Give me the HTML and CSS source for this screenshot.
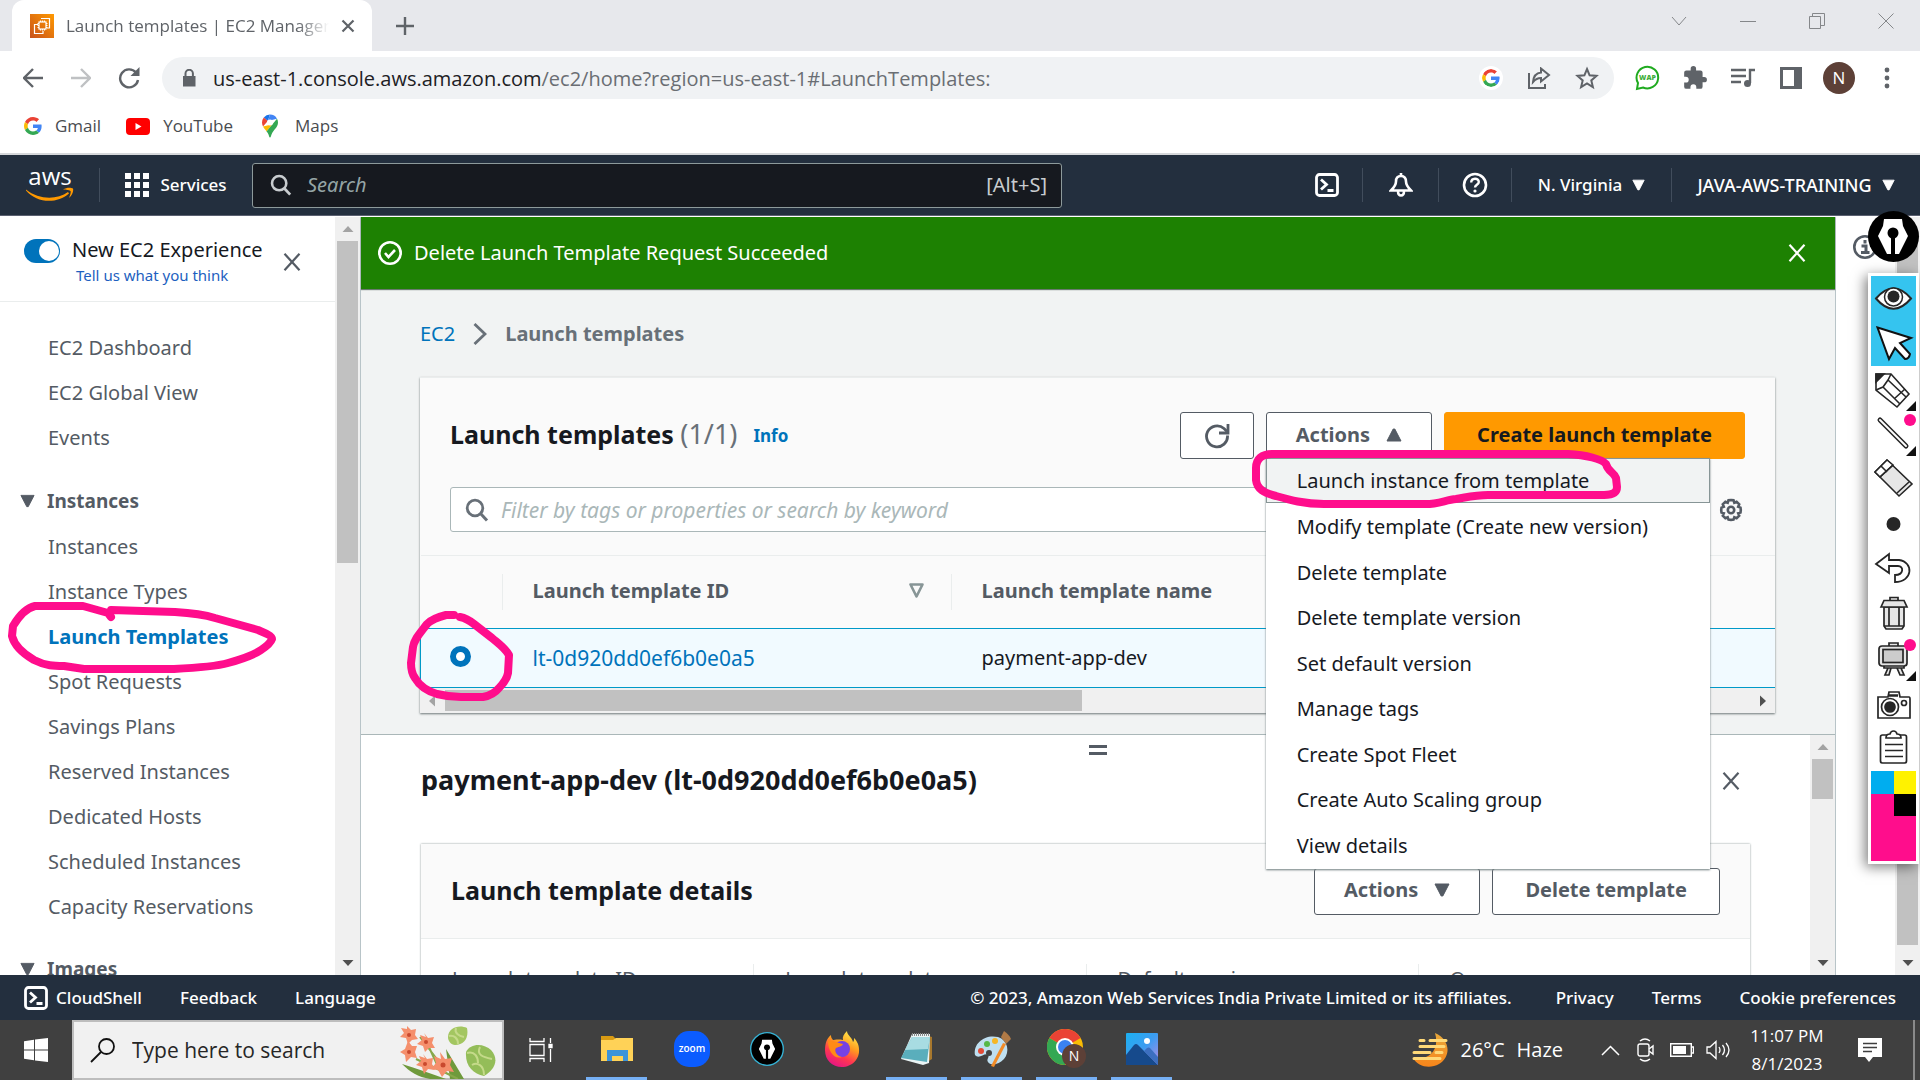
FILE: index.html
```html
<!DOCTYPE html>
<html lang="en">
<head>
<meta charset="utf-8">
<title>Launch templates | EC2 Management Console</title>
<link rel="stylesheet" href="styles.css">
</head>
<body>
<svg class="sprite" aria-hidden="true">
  <symbol id="i-close" viewBox="0 0 20 24"><path d="M1 2l18 20M19 2L1 22" fill="none" stroke="currentColor" stroke-width="2.6"/></symbol>
  <symbol id="i-shell" viewBox="0 0 24 24"><rect x="1.5" y="1.5" width="21" height="21" rx="3" fill="none" stroke="currentColor" stroke-width="2.8"/><path d="M6 6.500l5.500 5-5.500 5M12.500 17.500h6" fill="none" stroke="currentColor" stroke-width="2.800"/></symbol>
  <symbol id="i-search" viewBox="0 0 24 24"><circle cx="10" cy="10" r="7.800" fill="none" stroke="currentColor" stroke-width="2.800"/><path d="M15.500 15.500l6.500 7" stroke="currentColor" stroke-width="3"/></symbol>
  <symbol id="i-down" viewBox="0 0 16 14"><path d="M1 1h14L8.800 13H7.200z" fill="currentColor" stroke="currentColor" stroke-linejoin="round"/></symbol>
  <symbol id="i-google" viewBox="0 0 48 48"><path fill="#EA4335" d="M24 9.500c3.540 0 6.710 1.220 9.210 3.600l6.850-6.850C35.900 2.380 30.470 0 24 0 14.620 0 6.510 5.380 2.560 13.220l7.980 6.190C12.430 13.720 17.740 9.500 24 9.500z"/><path fill="#4285F4" d="M46.980 24.550c0-1.570-.15-3.090-.38-4.550H24v9.020h12.940c-.58 2.960-2.260 5.480-4.780 7.180l7.730 6c4.510-4.180 7.090-10.360 7.090-17.650z"/><path fill="#FBBC05" d="M10.530 28.590c-.48-1.450-.76-2.990-.76-4.590s.27-3.140.76-4.590l-7.980-6.190C.92 16.460 0 20.120 0 24s.92 7.540 2.560 10.780l7.970-6.190z"/><path fill="#34A853" d="M24 48c6.480 0 11.930-2.130 15.890-5.810l-7.730-6c-2.150 1.450-4.920 2.300-8.160 2.300-6.260 0-11.570-4.220-13.470-9.910l-7.980 6.190C6.510 42.620 14.620 48 24 48z"/></symbol>
  <symbol id="i-nib" viewBox="0 0 50 50"><path d="M16 8h18l1 7 5 10-9 18h-4V25h-4v18h-4l-9-18 5-10z" fill="#fff"/><circle cx="25" cy="22" r="5.500" fill="#000"/><path d="M25 22v21" stroke="#000" stroke-width="3"/></symbol>
  <symbol id="i-up-s" viewBox="0 0 12 8"><path d="M6 1l5.500 6H.5z" fill="currentColor"/></symbol>
  <symbol id="i-down-s" viewBox="0 0 12 8"><path d="M6 7l5.500-6H.5z" fill="currentColor"/></symbol>
</svg>

<header class="browser">
  <div class="tabstrip">
    <div class="tab">
      <svg class="favicon" viewBox="0 0 24 24"><defs><linearGradient id="fav" x1="0" y1="1" x2="1" y2="0"><stop offset="0" stop-color="#c8511b"/><stop offset="1" stop-color="#ff9900"/></linearGradient></defs><rect width="24" height="24" fill="url(#fav)"/><g fill="none" stroke="#fff" stroke-width="1.200"><path d="M11 4.500h8.500V14h-2.500M8 10.500H4.500v9H13V17"/><rect x="9" y="8" width="7" height="7"/><path d="M10.500 6.500V8M12.500 6.500V8M14.500 6.500V8M10.500 15v1.500M12.500 15v1.500M14.500 15v1.500M7.500 9.500H9M7.500 11.500H9M7.500 13.500H9M16 9.500h1.500M16 11.500h1.500M16 13.500h1.500"/></g></svg>
      <span class="tab-title">Launch templates | EC2 Management</span>
      <button class="plain tab-close" aria-label="Close tab"><svg width="14" height="14" viewBox="0 0 14 14"><path d="M1.500 1.500l11 11M12.500 1.500l-11 11" stroke="currentColor" stroke-width="2.200"/></svg></button>
    </div>
    <button class="plain newtab" aria-label="New tab"><svg width="18" height="18" viewBox="0 0 18 18"><path d="M9 0v18M0 9h18" stroke="currentColor" stroke-width="2.400"/></svg></button>
    <div class="winctl">
      <button class="plain" aria-label="Tab search"><svg width="16" height="10" viewBox="0 0 16 10"><path d="M1 1l7 8 7-8" fill="none" stroke="currentColor"/></svg></button>
      <button class="plain" aria-label="Minimize"><svg width="16" height="10" viewBox="0 0 16 10"><path d="M0 5.500h16" stroke="currentColor"/></svg></button>
      <button class="plain" aria-label="Restore"><svg width="16" height="16" viewBox="0 0 16 16"><path d="M.5 3.500h11v12H.5zM3.500 3.500v-3h12v12h-4" fill="none" stroke="currentColor"/></svg></button>
      <button class="plain" aria-label="Close"><svg width="16" height="16" viewBox="0 0 16 16"><path d="M.5.5l15 15M15.500.5l-15 15" stroke="currentColor"/></svg></button>
    </div>
  </div>
  <div class="toolbar">
    <button class="plain slot" aria-label="Back"><svg width="20" height="20" viewBox="0 0 20 20"><path d="M20 10H2M10 1l-9 9 9 9" fill="none" stroke="#5f6368" stroke-width="2.400"/></svg></button>
    <button class="plain slot" aria-label="Forward"><svg width="20" height="20" viewBox="0 0 20 20"><path d="M0 10h18M10 1l9 9-9 9" fill="none" stroke="#bfc1c3" stroke-width="2.400"/></svg></button>
    <button class="plain slot" aria-label="Reload"><svg width="22" height="22" viewBox="0 0 22 22"><path d="M18 5.500A9 9 0 1 0 20 13" fill="none" stroke="#5f6368" stroke-width="2.400"/><path d="M21.500 0v9h-9z" fill="#5f6368"/></svg></button>
    <div class="omnibox">
      <svg class="lock" width="24" height="18" viewBox="0 0 24 18"><path d="M6 7h12.500v10.500H6z" fill="#5f6368"/><path d="M8.500 8V4.500a3.700 3.700 0 0 1 7.400 0V8" fill="none" stroke="#5f6368" stroke-width="2"/></svg>
      <span class="url">us-east-1.console.aws.amazon.com<span class="dim">/ec2/home?region=us-east-1#LaunchTemplates:</span></span>
      <button class="plain slot" aria-label="Google"><svg class="disc" width="18" height="18"><use href="#i-google"/></svg></button>
      <button class="plain slot" aria-label="Share"><svg width="24" height="22" viewBox="0 0 24 22" fill="none" stroke="#5f6368" stroke-width="2"><path d="M2 6v15h16v-4M14 1.500l8 6.500-8 6.500V11c-3.500 0-5.500 1-8 4 .500-5.500 3-9 8-9.500z"/></svg></button>
      <button class="plain slot" aria-label="Bookmark"><svg width="24" height="24" viewBox="0 0 24 24"><path d="M12 3l2.600 6.300 6.900.6-5.200 4.500 1.600 6.700-5.900-3.600-5.900 3.600 1.600-6.700-5.200-4.500 6.900-.6z" fill="none" stroke="#5f6368" stroke-width="2"/></svg></button>
    </div>
    <button class="plain slot" aria-label="WAP"><svg width="26" height="26" viewBox="0 0 26 26"><path d="M3 24l1-6A10.800 10.800 0 1 1 9 22.500z" fill="none" stroke="#1faa1f" stroke-width="2"/><text x="13.500" y="15" font-family="Open Sans, sans-serif" font-size="7" font-weight="800" fill="#3fae3a" text-anchor="middle">WAP</text></svg></button>
    <button class="plain slot" aria-label="Extensions"><svg width="26" height="26" viewBox="0 0 24 24"><path d="M20.500 11H19V7a2 2 0 0 0-2-2h-4V3.500a2.500 2.500 0 0 0-5 0V5H4a2 2 0 0 0-2 2v3.800h1.500a2.700 2.700 0 0 1 0 5.400H2V20a2 2 0 0 0 2 2h3.800v-1.500a2.700 2.700 0 0 1 5.400 0V22H17a2 2 0 0 0 2-2v-4h1.500a2.500 2.500 0 0 0 0-5z" fill="#5f6368"/></svg></button>
    <button class="plain slot" aria-label="Media"><svg width="24" height="20" viewBox="0 0 24 20"><path d="M0 2h15M0 8h15M0 14h10M24 2h-5v13" fill="none" stroke="#5f6368" stroke-width="2.400"/><circle cx="16.500" cy="15.500" r="3.500" fill="#5f6368"/></svg></button>
    <button class="plain slot" aria-label="Side panel"><svg width="22" height="22" viewBox="0 0 22 22"><path d="M0 0h22v22H0zM3 3v16h11V3z" fill="#5f6368" fill-rule="evenodd"/></svg></button>
    <button class="plain slot" aria-label="Profile"><span class="avatar">N</span></button>
    <button class="plain slot" aria-label="Menu"><svg width="6" height="22" viewBox="0 0 6 22" fill="#5f6368"><circle cx="3" cy="3" r="2.400"/><circle cx="3" cy="11" r="2.400"/><circle cx="3" cy="19" r="2.400"/></svg></button>
  </div>
  <nav class="bookmarks">
    <a href="#"><svg width="18" height="18"><use href="#i-google"/></svg>Gmail</a>
    <a href="#"><svg width="24" height="17" viewBox="0 0 24 17"><rect width="24" height="17" rx="4" fill="#f00"/><path d="M9.500 5v7l6-3.500z" fill="#fff"/></svg>YouTube</a>
    <a href="#"><svg width="24" height="24" viewBox="0 0 24 24"><path d="M12 .5a8 8 0 0 0-6.200 3l4 3.400z" fill="#1a73e8"/><path d="M5.800 3.500A8 8 0 0 0 4 8.600c0 1.500.4 2.800 1 4l4.800-5.700z" fill="#ea4335"/><path d="M12 .5a8 8 0 0 1 7 4.200L9.800 6.900z" fill="#4285f4"/><path d="M5 12.600c.9 1.700 2.400 3 3.500 4.900L19 4.700l-4.500 5.500z" fill="#fbbc04"/><path d="M19 4.700c.7 1.200 1 2.500 1 3.900 0 5.200-4.500 6.900-6.500 11.900-.5 1.300-.7 3-1.500 3s-1-1.700-1.500-3c-.5-1.200-1.200-2.200-2-3z" fill="#34a853"/><circle cx="12" cy="8.600" r="3" fill="#fff"/></svg>Maps</a>
  </nav>
</header>

<header class="aws-bar">
  <a class="aws-logo" href="#" aria-label="AWS"><svg width="50" height="34" viewBox="0 0 50 34"><text x="25" y="17" font-family="Open Sans, sans-serif" font-size="24" font-weight="500" fill="#fff" text-anchor="middle">aws</text><path d="M1 21.500c13 10.500 31 10.500 42 2.500l1 1.500c-12 10.500-32 10-43-3zM38 21.500c4-2.500 8-2 10-1 .8 3-1 7-4 9.500 1.500-3.500 2-6 1.500-7-1.500-1-4.500-1.500-7.500-1.500z" fill="#f90"/></svg></a>
  <button class="plain services"><svg width="24" height="24" viewBox="0 0 24 24" fill="#fff"><path d="M0 0h6v6H0zM9 0h6v6H9zM18 0h6v6h-6zM0 9h6v6H0zM9 9h6v6H9zM18 9h6v6h-6zM0 18h6v6H0zM9 18h6v6H9zM18 18h6v6h-6z"/></svg>Services</button>
  <label class="aws-search"><svg width="22" height="22"><use href="#i-search"/></svg><input type="search" placeholder="Search" aria-label="Search"><span>[Alt+S]</span></label>
  <div class="aws-tools">
    <button class="plain w72" aria-label="CloudShell"><svg width="24" height="24"><use href="#i-shell"/></svg></button>
    <button class="plain w76" aria-label="Notifications"><svg width="24" height="24" viewBox="0 0 24 24" fill="none" stroke="#fff" stroke-width="2.600"><path d="M12 0v3M12 3c-3.500 0-5 2.500-5 5.500 0 4-2.500 6.500-5 9h20c-2.500-2.500-5-5-5-9C17 5.500 15.500 3 12 3zM9 18c0 6 6 6 6 0"/></svg></button>
    <button class="plain w73" aria-label="Help"><svg width="26" height="26" viewBox="0 0 26 26"><circle cx="13" cy="13" r="11" fill="none" stroke="#fff" stroke-width="2.600"/><path d="M9.200 10.500c0-5 7.600-5 7.600-.5 0 2.800-3.800 2.800-3.800 5.500" fill="none" stroke="#fff" stroke-width="2.400"/><circle cx="13" cy="19" r="1.600" fill="#fff"/></svg></button>
    <button class="plain w160">N. Virginia<svg width="13" height="12"><use href="#i-down"/></svg></button>
    <button class="plain w248">JAVA-AWS-TRAINING<svg width="13" height="12"><use href="#i-down"/></svg></button>
  </div>
</header>

<div class="console">
  <aside class="side">
    <div class="side-body">
      <div class="side-top">
        <label class="switch"><input type="checkbox" checked aria-label="New EC2 Experience"></label>
        <div class="side-title"><span>New EC2 Experience</span><a href="#">Tell us what you think</a></div>
        <button class="plain" aria-label="Close navigation"><svg width="20" height="20"><use href="#i-close"/></svg></button>
      </div>
      <ul class="nav first"><li><a href="#">EC2 Dashboard</a></li><li><a href="#">EC2 Global View</a></li><li><a href="#">Events</a></li></ul>
      <h3><svg width="15" height="14"><use href="#i-down"/></svg>Instances</h3>
      <ul class="nav">
        <li><a href="#">Instances</a></li><li><a href="#">Instance Types</a></li>
        <li class="current"><a href="#">Launch Templates</a>
          <svg class="ink ink-nav" width="272" height="76" viewBox="8 600 272 76"><path d="M112 617l-3-4-25-7H36c-9 2-16 10-22 20l-1 10c2 8 10 17 22 24 12 6 20 6 30 6l20 3h90c20-1 40-2 54-6 14-4 26-8 33-13 6-4 10-8 11-11 0-3-7-6-14-9l-43-12c-13-4-24-5-40-6l-64-2"/></svg></li>
        <li><a href="#">Spot Requests</a></li><li><a href="#">Savings Plans</a></li><li><a href="#">Reserved Instances</a></li><li><a href="#">Dedicated Hosts</a></li><li><a href="#">Scheduled Instances</a></li><li><a href="#">Capacity Reservations</a></li>
      </ul>
      <h3><svg width="15" height="14"><use href="#i-down"/></svg>Images</h3>
    </div>
    <div class="vbar"><svg class="off" width="12" height="8"><use href="#i-up-s"/></svg><i class="thumb t-side"></i><svg width="12" height="8"><use href="#i-down-s"/></svg></div>
  </aside>

  <main>
    <div class="flash" role="status">
      <svg width="26" height="26" viewBox="0 0 26 26" fill="none" stroke="#fff" stroke-width="2.600"><circle cx="13" cy="13" r="10.700"/><path d="M8 13l3.500 4 6.500-7"/></svg>
      <span>Delete Launch Template Request Succeeded</span>
      <button class="plain" aria-label="Dismiss"><svg width="20" height="20"><use href="#i-close"/></svg></button>
    </div>
    <section class="upper">
      <nav class="crumbs"><a href="#">EC2</a><svg width="14" height="22" viewBox="0 0 14 22"><path d="M1.500 1l10.500 10-10.500 10" fill="none" stroke="#687078" stroke-width="2.800"/></svg><span>Launch templates</span></nav>
      <div class="card">
        <div class="card-head">
          <h1>Launch templates <span>(1/1)</span></h1><a class="info" href="#">Info</a>
          <button class="btn refresh" aria-label="Refresh"><svg width="26" height="26" viewBox="0 0 26 26"><path d="M23.500 12.500a10.500 10.500 0 1 1-3.500-7l3 3" fill="none" stroke="#545b64" stroke-width="2.800"/><path d="M24 1v9h-9" fill="none" stroke="#545b64" stroke-width="2.800"/></svg></button>
          <div class="drop">
            <button class="btn" aria-expanded="true">Actions<svg class="flip" width="16" height="14"><use href="#i-down"/></svg></button>
            <ul class="menu">
              <li class="hover"><button class="plain">Launch instance from template</button></li>
              <li><button class="plain">Modify template (Create new version)</button></li>
              <li><button class="plain">Delete template</button></li>
              <li><button class="plain">Delete template version</button></li>
              <li><button class="plain">Set default version</button></li>
              <li><button class="plain">Manage tags</button></li>
              <li><button class="plain">Create Spot Fleet</button></li>
              <li><button class="plain">Create Auto Scaling group</button></li>
              <li><button class="plain">View details</button></li>
            </ul>
            <svg class="ink ink-menu" width="376" height="64" viewBox="1248 446 376 64"><path d="M1442 454h-172c-10 0-16 5-16 14v12c1 9 8 13 20 16 14 4 28 8 48 8h102c12 0 20-4 30-5 12-2 20-4 32-4h116c10 0 13-3 13-8l-1-9c-2-6-8-6-10-14-4-5-20-9-38-10z"/></svg>
          </div>
          <button class="btn primary">Create launch template</button>
        </div>
        <div class="filter-row">
          <label class="filter"><svg width="24" height="24"><use href="#i-search"/></svg><input type="text" placeholder="Filter by tags or properties or search by keyword" aria-label="Filter launch templates"></label>
          <button class="plain" aria-label="Preferences"><svg width="24" height="24" viewBox="0 0 24 24" fill="none" stroke="#545b64"><path d="M12 2l2.500.3.800 2.400 2.300-1 2.600 2.600-1 2.400 2.300.9.300 2.400-.3 2.500-2.300.8 1 2.300-2.600 2.700-2.300-1-.8 2.300-2.500.3-2.500-.3-.8-2.300-2.300 1-2.600-2.700 1-2.300-2.300-.8-.3-2.500.3-2.400 2.300-.9-1-2.400 2.600-2.600 2.300 1 .8-2.400z" stroke-width="2.600"/><circle cx="12" cy="12" r="3.200" stroke-width="2.600"/></svg></button>
        </div>
        <table>
          <thead><tr><th class="c-pick"></th><th class="c-id"><span>Launch template ID</span><svg width="15" height="15" viewBox="0 0 15 15"><path d="M1.500 1.500h12l-6 12z" fill="none" stroke="#879596" stroke-width="2.600" stroke-linejoin="round"/></svg></th><th><span>Launch template name</span></th></tr></thead>
          <tbody><tr><td class="c-pick"><input type="radio" name="lt" checked aria-label="Select payment-app-dev"></td><td><a href="#">lt-0d920dd0ef6b0e0a5</a></td><td>payment-app-dev</td></tr></tbody>
        </table>
        <div class="hbar"><svg class="off left" width="12" height="8"><use href="#i-up-s"/></svg><i></i><svg class="right" width="12" height="8"><use href="#i-up-s"/></svg></div>
        <svg class="ink ink-radio" width="112" height="96" viewBox="406 608 112 96"><path d="M455 615h-8c-8 2-14 4-19 9-6 8-13 15-14 23l-2 16c0 6 1 11 4 15 4 7 12 13 22 16 8 2 15 3 24 3h22c6-1 12-4 16-9 5-5 8-9 9-15l1-18c-4-7-10-11-17-17l-18-14c-5-4-9-6-14-7"/></svg>
      </div>
    </section>
    <section class="split">
      <div class="split-body">
        <div class="grip"><i></i><i></i></div>
        <div class="split-title"><h2>payment-app-dev (lt-0d920dd0ef6b0e0a5)</h2><button class="plain" aria-label="Close panel"><svg width="20" height="20"><use href="#i-close"/></svg></button></div>
        <div class="details">
          <div class="details-head"><h2>Launch template details</h2><button class="btn">Actions<svg width="16" height="14"><use href="#i-down"/></svg></button><button class="btn wide">Delete template</button></div>
          <dl><dt>Launch template ID</dt><dt>Launch template name</dt><dt>Default version</dt><dt>Owner</dt></dl>
        </div>
      </div>
      <div class="vbar"><svg class="off" width="12" height="8"><use href="#i-up-s"/></svg><i class="thumb t-split"></i><svg width="12" height="8"><use href="#i-down-s"/></svg></div>
    </section>
  </main>

  <aside class="help">
    <button class="plain" aria-label="Open help panel"><svg width="26" height="26" viewBox="0 0 26 26"><circle cx="13" cy="13" r="10.700" fill="none" stroke="#545b64" stroke-width="2.600"/><path d="M13 6v3.500M9.500 12H14v6.500M9 18.500h8.500" fill="none" stroke="#545b64" stroke-width="3"/></svg></button>
    <div class="vbar"><svg class="off" width="12" height="8"><use href="#i-up-s"/></svg><i class="thumb t-page"></i><svg width="12" height="8"><use href="#i-down-s"/></svg></div>
  </aside>

  <div class="pen">
    <div class="pen-badge"><svg width="50" height="50"><use href="#i-nib"/></svg></div>
    <div class="pen-tools">
      <button class="plain on" aria-label="Show"><svg width="45" height="45" viewBox="0 0 45 45"><path d="M5 22.500Q22.500 2 40 22.500 22.500 43 5 22.500z" fill="#fff" stroke="#262626" stroke-width="2"/><circle cx="22.500" cy="21" r="9" fill="#fff" stroke="#262626" stroke-width="1.500"/><circle cx="22.500" cy="20.500" r="6" fill="#262626"/></svg></button>
      <button class="plain on" aria-label="Pointer"><svg width="45" height="45" viewBox="0 0 45 45"><path d="M6.500 6.500L40 17l-11 5 10 11q-1 5-5 5L24 27l-6 11z" fill="#fff" stroke="#111" stroke-width="2"/></svg></button>
      <button class="plain" aria-label="Pen"><svg width="45" height="45" viewBox="0 0 45 45" stroke="#262626" stroke-width="1.600" fill="#fff"><path d="M5 8h15l18 20-12 13L5 24z"/><path d="M5 24l7-3 5-7 3-6M12 21l17 17M17 14l18 17M23 33l11-10" fill="none"/><path d="M5 8h8l-8 8z" fill="#262626"/><path d="M45 35v10H35z" fill="#111" stroke="none"/></svg></button>
      <button class="plain" aria-label="Line"><svg width="45" height="45" viewBox="0 0 45 45"><path d="M9 9l26 26" stroke="#262626" stroke-width="5" stroke-linecap="round"/><path d="M9 9l26 26" stroke="#fff" stroke-width="2" stroke-linecap="round"/><circle cx="39" cy="9" r="6" fill="#ff0d8c"/><path d="M45 35v10H35z" fill="#111"/></svg></button>
      <button class="plain" aria-label="Eraser"><svg width="45" height="45" viewBox="0 0 45 45" stroke="#262626" stroke-width="1.600"><path d="M4 16L16 4l25 24-13 12z" fill="#e6e6e6"/><path d="M4 16L16 4l6 5L9 21z" fill="#fff"/><path d="M26 37l12-11M9 21l13-12M10 10l6 6" fill="none"/></svg></button>
      <button class="plain" aria-label="Size"><svg width="45" height="45" viewBox="0 0 45 45"><circle cx="22.500" cy="23" r="7" fill="#262626"/></svg></button>
      <button class="plain" aria-label="Undo"><svg width="45" height="45" viewBox="0 0 45 45"><path d="M5 18L18 8v6h10c15 2 14 22-4 22v-7c9 0 9-9 3-9h-9v7z" fill="#fff" stroke="#262626" stroke-width="1.800"/></svg></button>
      <button class="plain" aria-label="Clear"><svg width="45" height="45" viewBox="0 0 45 45" stroke="#262626" stroke-width="1.700" fill="#e6e6e6"><path d="M19 9V6.500h8V9M13 16h20v19l-2 3H15l-2-3z"/><path d="M10 16l3-6.500h20l3 6.500zM18 16v19M28 16v19M13 35h20" /></svg></button>
      <button class="plain" aria-label="Board"><svg width="45" height="45" viewBox="0 0 45 45" stroke="#262626" stroke-width="1.700" fill="#e6e6e6"><path d="M18 10V7h9v3M14 32l-1 0v-3h20v3zM17 32l-3 7h4l2-7M26 32l3 7h4l-3-7"/><rect x="8" y="10" width="28" height="20" rx="3"/><rect x="12" y="13.500" width="20" height="13" fill="#ccc"/><circle cx="39" cy="9" r="6" fill="#ff0d8c" stroke="none"/><path d="M45 35v10H35z" fill="#111" stroke="none"/></svg></button>
      <button class="plain" aria-label="Capture"><svg width="45" height="45" viewBox="0 0 45 45" stroke="#262626" stroke-width="1.700" fill="#fff"><path d="M7 16h10l1-5h10l1 5h9q1 0 1 2v19H7z"/><circle cx="19" cy="26" r="8.500"/><circle cx="19" cy="26" r="5" fill="#262626"/><circle cx="33" cy="22" r="2.500"/><path d="M18 14.500h9" stroke-width="2.500"/></svg></button>
      <button class="plain" aria-label="Clipboard"><svg width="45" height="45" viewBox="0 0 45 45" stroke="#262626" stroke-width="1.700" fill="#fff"><rect x="9.500" y="9" width="26" height="28" rx="2"/><path d="M15 12c0-4 3-4 4-4 1-4 6-4 7 0 1 0 4 0 4 4zM14 18.500h18M14 24.500h18M14 30.500h18"/></svg></button>
      <div class="swatches"><i class="cyan"></i><i class="yellow"></i><i class="black"></i></div>
    </div>
  </div>
</div>

<footer class="aws-foot">
  <a href="#" class="shell"><svg width="24" height="24"><use href="#i-shell"/></svg>CloudShell</a><a href="#">Feedback</a><a href="#">Language</a>
  <span class="copy">© 2023, Amazon Web Services India Private Limited or its affiliates.</span><a href="#">Privacy</a><a href="#">Terms</a><a href="#">Cookie preferences</a>
</footer>

<footer class="taskbar">
  <button class="plain start" aria-label="Start"><svg width="24" height="24" viewBox="0 0 24 24" fill="#fff"><path d="M0 3.300l10-1.500v9.700H0zM11 1.600L24 0v11.500H11zM0 12.500h10v9.700L0 20.700zM11 12.500h13V24l-13-1.600z"/></svg></button>
  <label class="task-search"><svg width="25" height="25" viewBox="0 0 25 25" fill="none" stroke="#111" stroke-width="1.800"><circle cx="16.500" cy="8.500" r="7.500"/><path d="M11 14L1 24"/></svg><input type="text" placeholder="Type here to search" aria-label="Type here to search">
    <svg class="flowers" width="98" height="54" viewBox="0 0 98 54"><path d="M4 39c16 5 30 10 44 15H32C20 52 12 47 4 39zM48 24l18 30H52z" fill="#6f9a3c"/><path d="M22 12l26 34M30 20l12 26M18 34l30 14 12 6" stroke="#87a84a" stroke-width="2" fill="none"/><g fill="#f58f6c"><path d="M9 1l4 4 5-1-1 6 3 4-6 1-4 4-2-6-6-1 4-4-3-5 6 1z"/><path d="M26 8l4 5 6-1-2 6 3 5-6 0-4 4-2-6-6-2 5-4-2-5 6 2z"/><path d="M10 16l4 5 5 0-2 6 2 6-6-1-5 5-1-7-5-3 5-3z"/><path d="M25 29l4 5 6-1-1 6 3 6-7-1-4 5-2-7-6-2 5-4-2-5 6 2z"/><path d="M42 27l5 7 7-1-2 7 4 7-7-1-5 6-4-7-7-1 5-6-2-7 7 3z"/></g><g fill="#c9492e"><circle cx="11" cy="10" r="2"/><circle cx="28" cy="17" r="2"/><circle cx="11" cy="27" r="2"/><circle cx="27" cy="39" r="2"/><circle cx="45" cy="40" r="2.500"/></g><path d="M50 12C50 3 61-1 69 3c2 10-3 17-12 17-4 0-7-4-7-8z" fill="#a3c661"/><path d="M68 27c5-10 19-8 25-2 9 10 3 20-7 26-11-2-19-10-18-24z" fill="#94bd59"/><path d="M51 11c5-1 9 2 9 8M58 3c-2 5 3 8 8 9M69 28c8-2 11 4 11 10M82 22c-4 8 3 10 12 12M74 40c5-3 12 0 12 10" fill="none" stroke="#c5da8a" stroke-width="2"/></svg></label>
  <button class="plain taskview" aria-label="Task view"><svg width="24" height="24" viewBox="0 0 24 24" fill="none" stroke="#fff" stroke-width="1.300"><path d="M1 0v3.500h14V0M1 24v-3.500h14V24M1 6.500h14v11H1zM21.500 0v5M21.500 11v13"/><path d="M20 6.500h3v3h-3z" fill="#fff"/></svg></button>
  <div class="apps">
    <button class="plain open" aria-label="File Explorer"><svg width="34" height="28" viewBox="0 0 34 28"><path d="M1 1h12l3 3h17v8H1z" fill="#d99b13"/><path d="M1 5h12l3-2h17v23H1z" fill="#ffd257"/><path d="M7 26V15h21v11h-5v-5H12v5z" fill="#3d94da"/></svg></button>
    <button class="plain" aria-label="Zoom"><svg width="36" height="36" viewBox="0 0 36 36"><rect width="36" height="36" rx="15" fill="#0b5cff"/><text x="18" y="21" font-family="Open Sans, sans-serif" font-size="10" font-weight="600" fill="#fff" text-anchor="middle">zoom</text></svg></button>
    <button class="plain" aria-label="Pen tool"><svg width="34" height="34" viewBox="0 0 50 50"><circle cx="25" cy="25" r="24" fill="#000" stroke="#36b3d6" stroke-width="2"/><use href="#i-nib" x="5" y="5" width="40" height="40"/></svg></button>
    <button class="plain" aria-label="Firefox"><svg width="36" height="36" viewBox="0 0 36 36"><defs><linearGradient id="ff" x1=".8" y1="0" x2=".3" y2="1"><stop offset="0" stop-color="#fff14f"/><stop offset=".4" stop-color="#ff9a1f"/><stop offset=".7" stop-color="#ff3750"/><stop offset="1" stop-color="#e31587"/></linearGradient></defs><path d="M23 0c-3 3-5 6-4 9-5-1-9 0-10 0-2-2-2-4-2-5-4 3-6 8-6 15 0 10 7 17 17 17s18-8 17-18c0-5-3-9-5-11 0 2 0 3-1 4C28 6 23 4 23 0z" fill="url(#ff)"/><circle cx="18" cy="18" r="8" fill="#7542e5"/><path d="M4 10c6-1 8 2 15 3-1 3-6 3-7 4-2 2 0 8 6 9-8 3-14-6-14-16z" fill="#ff8a16"/></svg></button>
    <button class="plain open" aria-label="Notepad"><svg width="34" height="34" viewBox="0 0 34 34"><path d="M25 3l7 2v22l-8 5z" fill="#a8782d"/><path d="M12 2h18l-1 29-6 2L1 27z" fill="#eaf4f5"/><path d="M12 5h18l-3 25L1 26z" fill="#5aaebc"/><path d="M12 5h18l-2 12L5 18z" fill="#a8dce2"/><path d="M12 2.500h18" stroke="#888" stroke-width="3" stroke-dasharray="1 1"/></svg></button>
    <button class="plain open" aria-label="Paint"><svg width="38" height="36" viewBox="0 0 38 36"><path d="M2 24C0 12 12 3 25 6c10 3 12 15 6 22-5 6-14 7-16 3-2-3 2-5 0-7-3-3-9 5-13 0z" fill="#bfdff0"/><circle cx="8" cy="20" r="3" fill="#e34b36"/><circle cx="14" cy="13" r="3" fill="#55b848"/><circle cx="22" cy="10" r="3" fill="#f6b626"/><circle cx="16" cy="22" r="3" fill="#444"/><path d="M30 12l3 1-12 23-3-1z" fill="#f28c28"/><path d="M28 6l3-6c3 2 6 5 7 8l-5 5z" fill="#b07a46"/></svg></button>
    <button class="plain open" aria-label="Chrome"><svg width="40" height="40" viewBox="0 0 40 40"><circle cx="18" cy="18" r="18" fill="#fbbc04"/><path d="M18 18L2.400 9a18 18 0 0 1 31.200 0z" fill="#ea4335"/><path d="M18 18L2.400 9A18 18 0 0 0 18 36z" fill="#34a853"/><circle cx="18" cy="18" r="9" fill="#fff"/><circle cx="18" cy="18" r="7" fill="#3b82f0"/><circle cx="27" cy="27" r="12" fill="#5d4037"/><text x="27" y="32" font-family="Open Sans, sans-serif" font-size="14" fill="#fff" text-anchor="middle">N</text></svg></button>
    <button class="plain open" aria-label="Photos"><svg width="32" height="32" viewBox="0 0 32 32"><defs><linearGradient id="ph" x1="0" y1="0" x2="1" y2="1"><stop offset="0" stop-color="#1bb1f2"/><stop offset=".5" stop-color="#3d9cf0"/><stop offset="1" stop-color="#b58ae0"/></linearGradient></defs><rect width="32" height="32" rx="1" fill="url(#ph)"/><path d="M0 22L8 12q2-2 4 0l20 20H0z" fill="#164a8c"/><path d="M18 18l3-3q2-1 3 0l8 9v8z" fill="#3c6fc0"/><circle cx="21" cy="8" r="3" fill="#fff"/></svg></button>
  </div>
  <button class="plain weather"><svg width="36" height="34" viewBox="0 0 36 34"><defs><linearGradient id="wx" x1="0" y1="0" x2="0" y2="1"><stop offset="0" stop-color="#e9a93a"/><stop offset="1" stop-color="#f7851b"/></linearGradient></defs><path d="M23 0c16 7 16 24 4 31-9 5-21 3-26-6 16 3 27-8 22-25z" fill="url(#wx)"/><path d="M8 7.500h4M18 7.500h16M8 13.500h24M2 19.500h16M24 19.500h6M2 25.500h26" stroke="#ffd978" stroke-width="3" stroke-linecap="round"/></svg><span>26°C</span><span>Haze</span></button>
  <div class="tray">
    <button class="plain" aria-label="Hidden icons"><svg width="19" height="11" viewBox="0 0 19 11"><path d="M1 10l8.500-8.500L18 10" fill="none" stroke="#fff" stroke-width="1.500"/></svg></button>
    <button class="plain" aria-label="Meet now"><svg width="18" height="24" viewBox="0 0 18 24" fill="none" stroke="#fff" stroke-width="1.400"><rect x="1" y="6" width="11" height="12" rx="2"/><path d="M12 11l4-3v8l-4-3M3 3q5-4 10 0M3 21q5 4 10 0"/></svg></button>
    <button class="plain" aria-label="Battery"><svg width="24" height="14" viewBox="0 0 24 14"><path d="M.7.7h20.600v12.600H.7zM22 4h1.500v6H22" fill="none" stroke="#fff" stroke-width="1.400"/><path d="M3 3h13v8H3z" fill="#fff"/></svg></button>
    <button class="plain" aria-label="Volume"><svg width="24" height="20" viewBox="0 0 24 20" fill="none" stroke="#fff" stroke-width="1.300"><path d="M1 7h3l6-5.500v17L4 13H1zM13 7q2 3 0 6M16.500 5q4 5 0 10M20 3q6 7 0 14"/></svg></button>
  </div>
  <div class="clock"><span>11:07 PM</span><span>8/1/2023</span></div>
  <button class="plain notes" aria-label="Notifications"><svg width="24" height="24" viewBox="0 0 24 24"><path d="M0 0h24v19H15l-4 5-4-5H0z" fill="#fff"/><path d="M5 5.500h14M5 9.500h14M5 13.500h9" stroke="#3f3f3f" stroke-width="1.400"/></svg></button>
</footer>
</body>
</html>
```
FILE: styles.css
```css
* { box-sizing: border-box; }
html, body { height: 100%; margin: 0; }
body {
  display: flex;
  flex-direction: column;
  overflow: hidden;
  background: #fff;
  color: #16191f;
  font: 20px/30px "Noto Sans", "Open Sans", sans-serif;
}
svg { display: block; flex: none; }
a { color: inherit; text-decoration: none; }
ul, dl { list-style: none; margin: 0; padding: 0; }
h1, h2, h3 { margin: 0; }
input { font: inherit; color: inherit; margin: 0; }
.plain {
  display: flex;
  align-items: center;
  justify-content: center;
  border: 0;
  padding: 0;
  background: none;
  color: inherit;
  font: inherit;
  white-space: nowrap;
}
.sprite { position: absolute; width: 0; height: 0; }

/* Browser chrome */
.browser { flex: none; color: #5f6368; font: 18px/24px "Open Sans", sans-serif; }
.tabstrip { display: flex; height: 51px; background: #e7e8ec; padding-left: 12px; }
.tab {
  display: flex;
  align-items: center;
  width: 360px;
  padding: 0 17px 0 18px;
  gap: 12px;
  background: #fff;
  border-radius: 12px 12px 0 0;
}
.favicon { width: 24px; height: 24px; }
.tab-title {
  flex: 1;
  overflow: hidden;
  white-space: nowrap;
  font-size: 17px;
  -webkit-mask-image: linear-gradient(to right, #000 88%, transparent);
  mask-image: linear-gradient(to right, #000 88%, transparent);
}
.newtab { width: 66px; }
.winctl { display: flex; height: 42px; margin-left: auto; color: #85878a; }
.winctl button { width: 69px; }
.toolbar { display: flex; align-items: center; height: 54px; padding: 0 9px; }
.slot { flex: none; width: 48px; height: 42px; }
.omnibox {
  display: flex;
  align-items: center;
  flex: 1;
  height: 42px;
  margin: 0 9px;
  padding: 0 3px 0 15px;
  border-radius: 21px;
  background: #f0f2f4;
  color: #202124;
  font-size: 20px;
}
.lock { margin-right: 12px; }
.url { flex: 1; padding-top: 2px; white-space: nowrap; overflow: hidden; }
.dim { color: #6a6e73; }
.disc { background: #fff; border-radius: 50%; box-shadow: 0 0 0 3px #fff; }
.avatar { width: 32px; height: 32px; border-radius: 50%; background: #5d4037; color: #fff; font-size: 17px; line-height: 32px; }
.bookmarks {
  display: flex;
  gap: 25px;
  height: 50px;
  padding: 0 24px 6px;
  align-items: center;
  border-bottom: 2px solid #d6d8da;
  color: #494c50;
  font-size: 17px;
}
.bookmarks a { display: flex; align-items: center; gap: 13px; }

/* Console header */
.aws-bar {
  display: flex;
  flex: none;
  align-items: center;
  height: 61px;
  border-bottom: 1px solid #5a6070;
  background: #232f3e;
  color: #fff;
  font-size: 18px;
  font-weight: 500;
}
.aws-logo { display: flex; justify-content: center; width: 100px; height: 34px; border-right: 1px solid #414d5c; }
.services { gap: 11px; width: 152px; font-size: 17px; }
.aws-search {
  display: flex;
  align-items: center;
  flex: 1;
  max-width: 810px;
  height: 45px;
  padding: 0 14px 0 17px;
  gap: 13px;
  border: 1px solid #8d9a9b;
  border-radius: 3px;
  background: #16191f;
  color: #c8cccf;
  font-size: 20px;
  font-weight: 400;
}
.aws-search input { flex: 1; min-width: 0; border: 0; background: none; outline: 0; font-style: italic; }
.aws-search input::placeholder { color: #95a5a6; }
.aws-tools { display: flex; margin-left: auto; }
.aws-tools button { height: 34px; gap: 10px; border-right: 1px solid #414d5c; }
.aws-tools button:last-child { border: 0; }
.w72 { width: 72px; }
.w76 { width: 76px; }
.w73 { width: 73px; }
.w160 { width: 160px; font-size: 17px; }
.w248 { width: 248px; }

/* Console body */
.console { position: relative; display: flex; flex: 1; min-height: 0; padding-top: 1px; }
.side { display: flex; flex: none; width: 360px; overflow: hidden; }
.side-body { flex: 1; }
.side-top { display: flex; height: 85px; padding: 18px 33px 0 24px; border-bottom: 1px solid #eaeded; }
.switch { margin: 4px 12px 0 0; height: 24px; }
.switch input { appearance: none; display: block; width: 36px; height: 24px; border-radius: 12px; background: #0073bb; }
.switch input::after { content: ""; display: block; width: 20px; height: 20px; margin: 2px 0 0 15px; border-radius: 50%; background: #fff; float: left; }
.side-title { display: flex; flex: 1; flex-direction: column; white-space: nowrap; }
.side-title span { line-height: 30px; }
.side-title a { padding-left: 4px; color: #1d5fc0; font-size: 15px; line-height: 20px; }
.side-top button { height: 54px; color: #545b64; }
.nav { padding-left: 48px; color: #545b64; }
.nav li { position: relative; line-height: 45px; white-space: nowrap; }
.nav.first { padding-top: 23px; padding-bottom: 1px; }
.side h3 { display: flex; align-items: center; gap: 12px; padding: 17px 0 0 20px; color: #545b64; font-size: 19px; line-height: 46px; }
.nav .current { color: #0073bb; font-weight: 700; }
.vbar { display: flex; flex: none; flex-direction: column; align-items: center; width: 25px; padding: 8px 0; background: #f0f0f0; color: #505050; }
.vbar svg:last-child { margin-top: auto; }
.off { color: #a3a3a3; }
.thumb { flex: none; width: 21px; margin-top: 8px; background: #c1c1c1; }
.t-side { flex: 0 1 322px; }
.t-split { height: 40px; }
.t-page { flex: 1; margin-bottom: 14px; }

main { display: flex; flex: 1; flex-direction: column; min-width: 0; border-right: 1px solid #b8c4c8; border-left: 1px solid #b8c4c8; }
.flash { display: flex; flex: none; align-items: center; height: 72px; padding: 0 28px 0 16px; gap: 11px; background: #1d8102; color: #fff; box-shadow: 0 1px 1px #6a7a70; z-index: 1; }
.flash span { flex: 1; }
.upper { flex: none; padding: 30px 60px 21px 59px; background: #f1f3f3; border-bottom: 1px solid #aab7b8; }
.crumbs { display: flex; align-items: center; height: 30px; gap: 18px; margin-bottom: 28px; }
.crumbs a { color: #0073bb; }
.crumbs span { color: #687078; font-weight: 700; }
.card { position: relative; background: #fafafa; box-shadow: 0 1px 2px #6d7778; border-top: 1px solid #eaeded; }
.card-head { display: flex; align-items: center; padding: 34px 30px 28px; gap: 12px; }
h1, h2 { padding-bottom: 3px; font-size: 25px; line-height: 30px; font-weight: 700; white-space: nowrap; }
h1 span { color: #687078; font-weight: 400; font-size: 27px; }
.info { flex: 1; margin-left: 4px; color: #0073bb; font-size: 17px; font-weight: 700; }
.btn {
  display: flex;
  align-items: center;
  justify-content: center;
  height: 47px;
  padding: 0 29px 2px;
  gap: 16px;
  border: 1px solid #545b64;
  border-radius: 3px;
  background: #fff;
  color: #545b64;
  font: 700 20px/30px "Noto Sans", "Open Sans", sans-serif;
  white-space: nowrap;
}
.refresh { width: 74px; padding: 0; }
.flip { transform: rotate(180deg); }
.primary, .wide { padding-right: 32px; padding-left: 32px; }
.primary { border-color: #f90; background: #f90; color: #16191f; }
.drop { position: relative; }
.menu { position: absolute; z-index: 3; top: 46px; left: 0; width: 444px; padding-bottom: 1px; background: #fff; box-shadow: 0 1px 2px #6d7b7d; }
.menu button { width: 100%; height: 45px; padding: 0 31px; justify-content: flex-start; }
.menu li { margin-bottom: 1px; }
.menu li:nth-child(odd):not(.hover) { margin-bottom: 0; }
.menu .hover { background: #f1f3f3; outline: 1px solid #879596; outline-offset: -1px; }
.filter-row { display: flex; align-items: center; padding: 0 32px 23px 30px; gap: 30px; }
.filter { display: flex; align-items: center; flex: 1; max-width: 1000px; height: 45px; padding: 0 14px; gap: 12px; border: 1px solid #aab7b8; border-radius: 3px; background: #fff; color: #687078; }
.filter-row button { margin-left: auto; }
.filter input { flex: 1; border: 0; outline: 0; background: none; font-size: 21px; font-style: italic; padding: 0; }
.filter input::placeholder { color: #aab7b8; }
table { width: 100%; table-layout: fixed; border-collapse: collapse; border-top: 1px solid #eaeded; }
th { height: 73px; padding: 0 0 3px 31px; color: #545b64; text-align: left; background: linear-gradient(#eaeded, #eaeded) left center / 1px 36px no-repeat; }
th.c-pick { width: 81px; background: none; padding: 0; }
th.c-id { width: 449px; }
.c-id span { display: inline-block; width: 376px; }
.c-id svg { display: inline-block; }
td { height: 59px; padding: 0 0 0 31px; border-top: 1px solid #0099c8; border-bottom: 1px solid #0099c8; background: #f1faff; }
td a { color: #0073bb; font-size: 21px; }
td.c-pick { padding: 0 0 3px 29px; border-left: 1px solid #0099c8; }
td input { appearance: none; display: block; width: 21px; height: 21px; border: 6px solid #0073bb; border-radius: 50%; background: #fff; }
.hbar { display: flex; align-items: center; height: 25px; padding: 0 6px; background: #f0f0f0; color: #505050; }
.hbar i { width: 637px; height: 21px; margin-left: 7px; background: #c1c1c1; }
.left { transform: rotate(-90deg); }
.right { transform: rotate(90deg); margin-left: auto; }

.split { display: flex; flex: 1; min-height: 0; overflow: hidden; background: #fff; }
.split-body { flex: 1; padding: 10px 60px 0; }
.grip { display: grid; gap: 4px; width: 42px; margin: 0 auto 8px; padding-left: 24px; }
.grip i { height: 3px; background: #545b64; }
.split-title { display: flex; align-items: center; justify-content: space-between; height: 36px; padding: 0 9px 0 0; margin-bottom: 45px; }
.split-title h2 { font-size: 27px; }
.split-title button { color: #545b64; }
.details { box-shadow: 0 0 2px #8a9596; }
.details-head { display: flex; align-items: center; height: 95px; padding: 0 30px; gap: 12px; background: #fafafa; border-bottom: 1px solid #eaeded; }
.details-head h2 { flex: 1; }
dl { display: grid; grid-template-columns: repeat(4, 1fr); padding: 25px 0 40px; }
dt { padding: 0 0 60px 31px; color: #545b64; border-left: 1px solid #eaeded; white-space: nowrap; }
dt:first-child { border: 0; }

.help { display: flex; flex: none; width: 84px; justify-content: flex-end; align-items: stretch; }
.help > button { height: 60px; margin-right: 17px; }

/* Screen pen */
.ink { position: absolute; z-index: 4; fill: none; stroke: #ff0d8c; stroke-width: 8; stroke-linecap: round; stroke-linejoin: round; pointer-events: none; }
.ink-nav { left: -41px; top: -14px; }
.ink-menu { left: -16px; top: 34px; }
.ink-radio { left: -15px; bottom: 9px; }
.pen { position: absolute; z-index: 5; top: -5px; right: 1px; width: 51px; }
.pen-badge { width: 51px; height: 51px; margin-bottom: 11px; border-radius: 50%; background: #000; }
.pen-tools { padding: 3px; background: #fff; box-shadow: -3px 3px 12px rgba(0, 0, 0, .5); }
.pen-tools button { height: 45px; }
.pen-tools .on { background: #35c4ef; }
.swatches { display: grid; grid-template-columns: 1fr 1fr; grid-template-rows: 23px 22px; height: 90px; background: #ff0d8c; }
.cyan { background: #00adef; }
.yellow { background: #fff200; }
.black { grid-column: 2; background: #000; }

/* Console footer */
.aws-foot { display: flex; flex: none; align-items: center; height: 45px; padding: 0 24px; gap: 38px; background: #232f3e; color: #fff; font-size: 17px; font-weight: 500; white-space: nowrap; }
.shell { display: flex; align-items: center; gap: 8px; }
.copy { margin: 0 6px 0 auto; }

/* Taskbar */
.taskbar { display: flex; flex: none; height: 60px; padding-right: 5px; background: #404040; color: #fff; font-family: "Open Sans", sans-serif; }
.start { width: 72px; }
.task-search { position: relative; display: flex; align-items: center; width: 432px; padding: 0 8px 0 16px; gap: 15px; border: 2px solid #bdbdbd; background: #f1f1f1; color: #262626; }
.task-search input { flex: 1; min-width: 0; border: 0; outline: 0; background: none; font-size: 21px; }
.task-search input::placeholder { color: #262626; }
.flowers { position: absolute; right: 6px; top: 3px; }
.taskview { width: 73px; }
.apps { display: flex; gap: 14px; padding-left: 9px; }
.apps button { width: 61px; border-bottom: 3px solid transparent; }
.apps .open { border-color: #76b0f5; }
.weather { margin-left: auto; margin-right: 29px; gap: 12px; }
.tray { display: flex; }
.tray button { width: 36px; }
.clock { display: flex; flex-direction: column; justify-content: center; width: 102px; font-size: 17px; line-height: 28px; text-align: center; }
.notes { width: 77px; padding-right: 11px; border-right: 2px solid #8a8a8a; }
```
